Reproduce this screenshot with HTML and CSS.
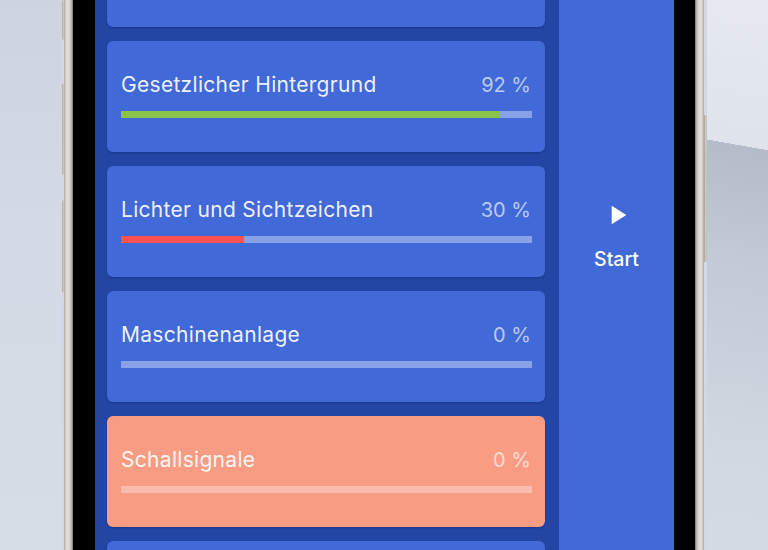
FILE: index.html
```html
<!DOCTYPE html>
<html lang="de">
<head>
<meta charset="utf-8">
<title>Lernfortschritt</title>
<link rel="stylesheet" href="styles.css">
</head>
<body>
<div class="scene">
  <div class="backdrop backdrop--left"></div>
  <div class="keys keys--left">
    <span class="key key--top"></span>
    <span class="key key--vol-up"></span>
    <span class="key key--vol-down"></span>
  </div>
  <div class="phone">
    <div class="bezel">
      <div class="screen">
        <div class="list">
          <div class="card card--stub"></div>
          <div class="card">
            <div class="card__head">
              <span class="card__title">Gesetzlicher Hintergrund</span>
              <span class="card__pct">92 %</span>
            </div>
            <div class="bar"><div class="bar__fill bar__fill--good" style="width:92%"></div></div>
          </div>
          <div class="card">
            <div class="card__head">
              <span class="card__title">Lichter und Sichtzeichen</span>
              <span class="card__pct">30 %</span>
            </div>
            <div class="bar"><div class="bar__fill bar__fill--bad" style="width:30%"></div></div>
          </div>
          <div class="card">
            <div class="card__head">
              <span class="card__title">Maschinenanlage</span>
              <span class="card__pct">0 %</span>
            </div>
            <div class="bar"><div class="bar__fill" style="width:0%"></div></div>
          </div>
          <div class="card card--active">
            <div class="card__head">
              <span class="card__title">Schallsignale</span>
              <span class="card__pct">0 %</span>
            </div>
            <div class="bar"><div class="bar__fill" style="width:0%"></div></div>
          </div>
          <div class="card card--next"></div>
        </div>
        <div class="start">
          <svg class="start__icon" viewBox="0 0 24 24" width="32" height="32" aria-hidden="true">
            <path d="M8 5v14l11-7z" fill="#ffffff"/>
          </svg>
          <span class="start__label">Start</span>
        </div>
      </div>
    </div>
  </div>
  <div class="keys keys--right">
    <span class="key key--power"></span>
  </div>
  <div class="backdrop backdrop--right"></div>
</div>
</body>
</html>
```

FILE: styles.css
```css
* { box-sizing: border-box; }

html, body {
  margin: 0;
  padding: 0;
  width: 768px;
  height: 550px;
  overflow: hidden;
  background: #d3d9e4;
  font-family: Inter, "Noto Sans", "Liberation Sans", sans-serif;
}

.scene {
  display: flex;
  width: 768px;
  height: 550px;
  overflow: hidden;
}

.backdrop--left {
  width: 62px;
  flex: none;
  background: linear-gradient(180deg, #ccd4e0 0%, #d3dae5 40%, #d7dde7 100%);
}

.backdrop--right {
  width: 61px;
  flex: none;
  background: linear-gradient(190deg,
    #e6e9f0 0,
    #dfe3eb 148px,
    #b4bbc9 148px,
    #c3c9d5 260px,
    #d2d8e2 450px,
    #d5dbe5 100%);
}

.keys {
  flex: none;
  display: flex;
  flex-direction: column;
}

.keys--left { width: 2px; }
.keys--right { width: 3px; }

.key {
  display: block;
  background: linear-gradient(90deg, #a19d95, #d4d1ca 60%, #bcb8b0);
}

.keys--left .key { border-radius: 2px 0 0 2px; }
.keys--right .key { border-radius: 0 2px 2px 0; }

.key--top { height: 40px; }
.key--vol-up { height: 92px; margin-top: 43px; }
.key--vol-down { height: 93px; margin-top: 25px; }
.key--power { height: 147px; margin-top: 115px; }

.phone {
  flex: none;
  width: 640px;
  height: 550px;
  padding: 0 9px;
  background: linear-gradient(90deg,
    #a9a59d 0,
    #d9d6cf 2px,
    #e4e1da 4px,
    #c9c5bd 7px,
    #77746f 9px,
    #000 9px,
    #000 calc(100% - 9px),
    #77746f calc(100% - 9px),
    #c9c5bd calc(100% - 7px),
    #e4e1da calc(100% - 4px),
    #d9d6cf calc(100% - 2px),
    #a9a59d 100%);
}

.bezel {
  height: 100%;
  background: #000;
  padding: 0 21px 0 22px;
}

.screen {
  height: 100%;
  display: flex;
  gap: 14px;
  padding-left: 12px;
  background: #2346a5;
  overflow: hidden;
}

.list {
  width: 438px;
  flex: none;
  display: flex;
  flex-direction: column;
  gap: 14px;
}

.card {
  flex: none;
  height: 111px;
  border-radius: 6px;
  background: #4169d8;
  padding: 0 13px 0 14px;
  display: flex;
  flex-direction: column;
  box-shadow: 0 1px 2px rgba(10, 25, 80, 0.35);
}

.card--stub {
  height: 27px;
  border-radius: 0 0 6px 6px;
}

.card--active {
  background: #f89c84;
}

.card__head {
  margin-top: 32px;
  height: 24px;
  display: flex;
  justify-content: space-between;
  align-items: baseline;
  line-height: 24px;
}

.card__title {
  font-size: 21px;
  letter-spacing: 0.3px;
  color: rgba(255, 255, 255, 0.93);
}

.card__pct {
  font-size: 20px;
  color: rgba(255, 255, 255, 0.66);
  padding-right: 1px;
}

.bar {
  margin-top: 14px;
  height: 7px;
  background: rgba(255, 255, 255, 0.38);
  display: flex;
}

.card--active .bar {
  background: rgba(255, 255, 255, 0.33);
}

.bar__fill {
  height: 100%;
}

.bar__fill--good { background: #8bc34a; }
.bar__fill--bad { background: #ff5252; }

.start {
  width: 115px;
  flex: none;
  background: #4169d8;
  display: flex;
  flex-direction: column;
  align-items: center;
  padding-top: 199px;
}

.start__icon {
  display: block;
  flex: none;
}

.start__label {
  margin-top: 17px;
  font-size: 19.5px;
  line-height: 22px;
  font-weight: 500;
  color: #ffffff;
}
```
